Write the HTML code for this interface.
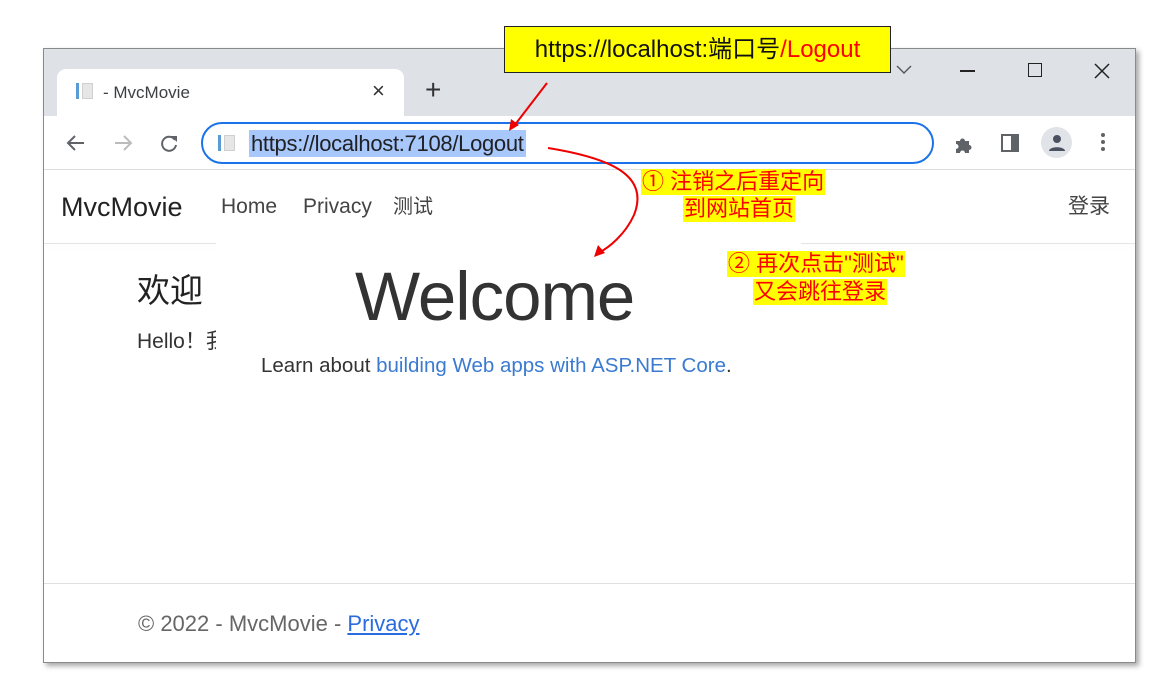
<!DOCTYPE html>
<html><head><meta charset="utf-8"><style>
*{margin:0;padding:0;box-sizing:border-box}
body{width:1158px;height:683px;background:#fff;position:relative;overflow:hidden;font-family:"Liberation Sans","Noto Sans CJK SC",sans-serif}
.a{position:absolute;white-space:nowrap}
.win{left:43px;top:48px;width:1093px;height:615px;border:1px solid #8a8a8a;background:#fff;box-shadow:3px 3px 5px rgba(0,0,0,.35)}
.strip{left:0;top:0;width:1091px;height:67px;background:#dee1e6}
.tab{left:13px;top:20px;width:347px;height:48px;background:#fff;border-radius:9px 9px 0 0}
.t{color:#333;font-size:16px}
.hl{background:#ffff00;color:#ff0000;font-size:22px;line-height:26px;padding:0 1px}
.nv{font-size:21px;color:#444;line-height:26px}
</style></head><body>
<div class="a win">
 <div class="a strip"></div>
 <div class="a tab"></div>
 <div class="a" style="left:32px;top:34px;width:3px;height:16px;background:#5a9bd5"></div>
 <div class="a" style="left:38px;top:34px;width:11px;height:16px;background:#e6e6e6;border:1px solid #d0d0d0"></div>
 <div class="a t" style="left:59px;top:34px;color:#3c4043;font-size:17px">- MvcMovie</div>
 <div class="a" style="left:328px;top:29px;font-size:22px;color:#333">×</div>
 <div class="a" style="left:381px;top:25px;font-size:28px;color:#333">+</div>
 <svg class="a" style="left:850px;top:14px" width="20" height="14"><path d="M3 3l7 7 7-7" stroke="#555" stroke-width="1.4" fill="none"/></svg>
 <div class="a" style="left:916px;top:21px;width:15px;height:1.5px;background:#222"></div>
 <div class="a" style="left:984px;top:14px;width:14px;height:14px;border:1.5px solid #222"></div>
 <svg class="a" style="left:1049px;top:13px" width="18" height="18"><path d="M2 2l14 14M16 2L2 16" stroke="#222" stroke-width="1.5"/></svg>
 <svg class="a" style="left:20px;top:83px" width="24" height="22"><path d="M20 11H5M11 4l-7 7 7 7" stroke="#5f6368" stroke-width="2" fill="none"/></svg>
 <svg class="a" style="left:67px;top:83px" width="24" height="22"><path d="M4 11h15M13 4l7 7-7 7" stroke="#bbb" stroke-width="2" fill="none"/></svg>
 <svg class="a" style="left:114px;top:83px" width="24" height="22"><path d="M17 8A7 7 0 1 0 18 13" stroke="#5f6368" stroke-width="2" fill="none"/><path d="M13 4h6v6z" fill="#5f6368"/></svg>
 <div class="a" style="left:157px;top:73px;width:733px;height:42px;border:2.5px solid #1a73e8;border-radius:21px;background:#fff"></div>
 <div class="a" style="left:174px;top:86px;width:3px;height:16px;background:#5a9bd5"></div>
 <div class="a" style="left:180px;top:86px;width:11px;height:16px;background:#e6e6e6;border:1px solid #d0d0d0"></div>
 <div class="a" style="left:205px;top:81px;height:27px;background:#a8c7fa;color:#202124;font-size:22px;line-height:27px;padding:0 2px;letter-spacing:-0.3px">https://localhost:7108/Logout</div>
 <svg class="a" style="left:909px;top:84px" width="22" height="22"><path d="M3 8h4a2.5 2.5 0 0 1 5 0h4v4a2.5 2.5 0 0 1 0 5v3H12a2.5 2.5 0 0 0-5 0H3v-4a2.5 2.5 0 0 0 0-5z" fill="#5f6368"/></svg>
 <div class="a" style="left:957px;top:85px;width:18px;height:18px;border:2px solid #5f6368;border-right-width:8px"></div>
 <div class="a" style="left:997px;top:78px;width:31px;height:31px;border-radius:50%;background:#e0e3e7"></div>
 <svg class="a" style="left:1003px;top:84px" width="20" height="20"><circle cx="10" cy="6" r="4" fill="#4a5160"/><path d="M2 18c0-5 16-5 16 0z" fill="#4a5160"/></svg>
 <div class="a" style="left:1057px;top:84px;width:4px;height:4px;border-radius:50%;background:#5f6368;box-shadow:0 7px 0 #5f6368,0 14px 0 #5f6368"></div>
 <div class="a" style="left:0;top:120px;width:1091px;height:1px;background:#ddd"></div>
 <div class="a" style="left:17px;top:142px;font-size:27px;color:#222;line-height:32px">MvcMovie</div>
 <div class="a nv" style="left:177px;top:145px">Home</div>
 <div class="a nv" style="left:259px;top:145px">Privacy</div>
 <div class="a nv" style="left:349px;top:145px;font-size:20px">测试</div>
 <div class="a nv" style="left:1024px;top:145px">登录</div>
 <div class="a" style="left:0;top:194px;width:1091px;height:1px;background:#e5e5e5;box-shadow:0 3px 8px rgba(0,0,0,.06)"></div>
 <div class="a" style="left:93px;top:222px;font-size:33px;color:#222;line-height:40px">欢迎</div>
 <div class="a" style="left:93px;top:276px;font-size:21px;color:#333">Hello！我</div>
 <div class="a" style="left:172px;top:192px;width:585px;height:170px;background:#fff"></div>
 <div class="a" style="left:311px;top:208px;font-size:69px;color:#333;letter-spacing:-1px">Welcome</div>
 <div class="a" style="left:217px;top:305px;font-size:20.5px;color:#333">Learn about <span style="color:#3a7ad0">building Web apps with ASP.NET Core</span>.</div>
 <div class="a" style="left:0;top:534px;width:1091px;height:1px;background:#e0e0e0"></div>
 <div class="a" style="left:94px;top:562px;font-size:22px;color:#666">© 2022 - MvcMovie - <span style="color:#2a6be0;text-decoration:underline">Privacy</span></div>
</div>
<div class="a" style="left:504px;top:26px;width:387px;height:47px;background:#ffff00;border:1px solid #222;font-size:24px;line-height:45px;text-align:center;color:#111">https://localhost:端口号<span style="color:#ff0000">/Logout</span></div>
<svg class="a" style="left:0;top:0" width="1158" height="683">
 <path d="M547 83L514 126" stroke="#e00" stroke-width="2"/>
 <path d="M509 131l2-12 8 6z" fill="#e00"/>
 <path d="M548 148C610 158 650 175 634 215C625 235 608 248 600 252" stroke="#e00" stroke-width="2" fill="none"/>
 <path d="M594 257l4-12 7 8z" fill="#e00"/>
</svg>
<div class="a hl" style="left:641px;top:169px">① 注销之后重定向</div>
<div class="a hl" style="left:683px;top:196px">到网站首页</div>
<div class="a hl" style="left:727px;top:251px">② 再次点击"测试"</div>
<div class="a hl" style="left:753px;top:279px">又会跳往登录</div>
</body></html>
